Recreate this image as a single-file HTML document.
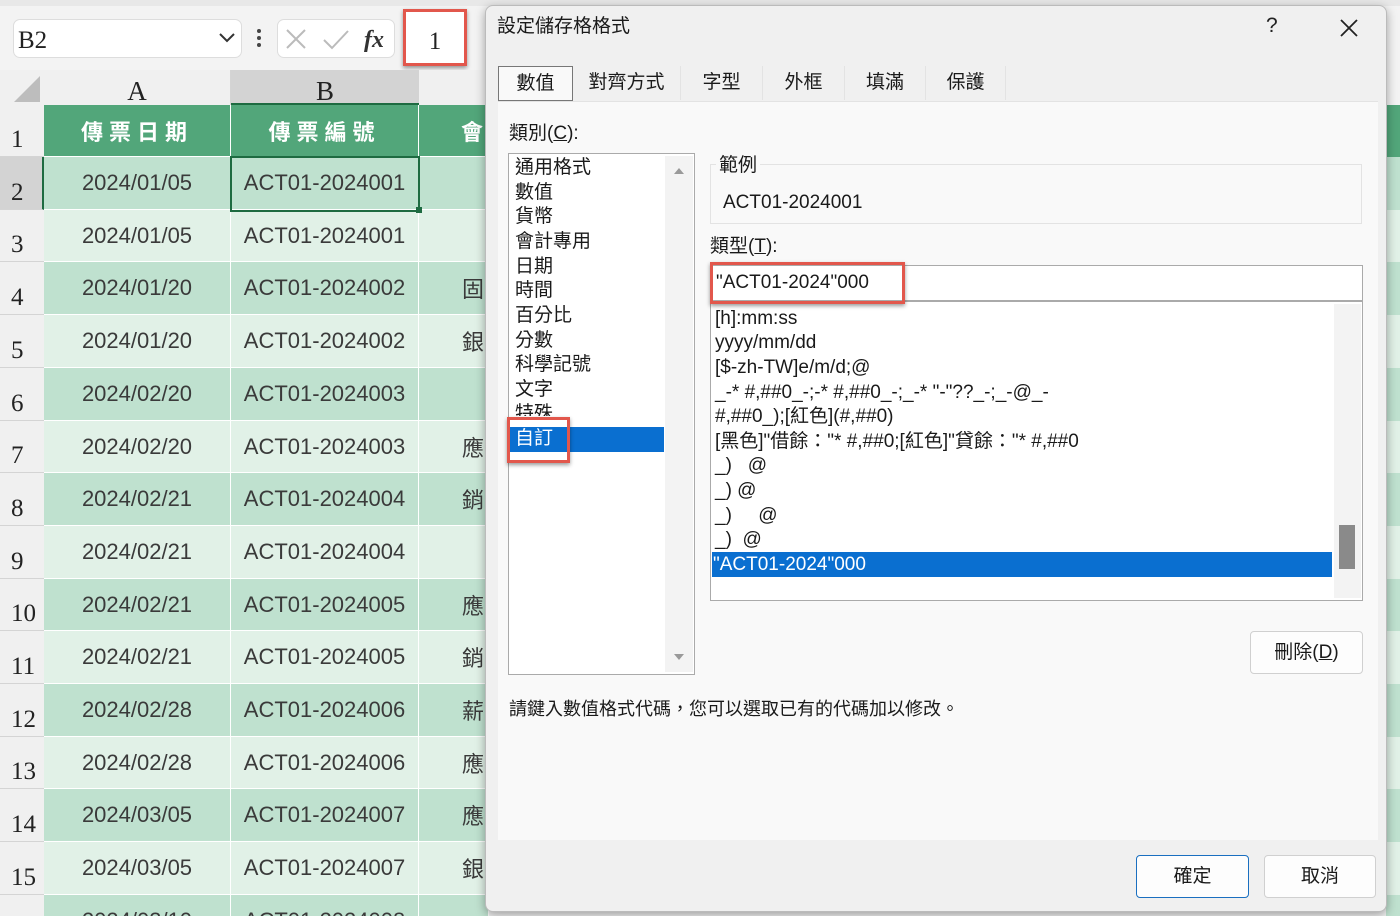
<!DOCTYPE html>
<html style="width:1400px;height:916px;overflow:hidden"><head><meta charset="utf-8"><style>
*{margin:0;padding:0;box-sizing:border-box}
body{width:1400px;height:916px;overflow:hidden;background:#f3f3f3;font-family:"Liberation Sans","Noto Sans CJK TC",sans-serif;position:relative;color:#222}
.a{position:absolute}
.cell{position:absolute;display:flex;align-items:center;justify-content:center;font-size:22px;color:#3a3a3a;border-right:1px solid #fff;border-bottom:1px solid #fff}
.rh{position:absolute;left:0;width:44px;background:#f0f0f0;border-bottom:1px solid #d4d4d4;font-family:"Liberation Serif",serif;font-size:25px;color:#222;display:flex;align-items:flex-end;padding:0 0 2px 11px}
.d{font-family:"Liberation Sans","Noto Sans CJK TC",sans-serif;font-size:19px;color:#1a1a1a;line-height:24px}
.li{position:absolute;left:515px;font-size:19px}
.fl{position:absolute;left:715px;font-size:19px;white-space:pre;height:24px;overflow:visible}
.tab{position:absolute;top:66px;height:34px;font-size:19px;display:flex;align-items:center;justify-content:center;background:#f0f0f0;border-right:1px solid #e3e3e3}
</style></head><body>
<div class="a" style="left:0;top:0;width:1400px;height:6px;background:#e8e8e8"></div>
<div class="a" style="left:13px;top:19px;width:229px;height:39px;background:#fff;border:1px solid #ddd;border-radius:7px;font-family:'Liberation Serif',serif;font-size:25px;padding:7px 0 0 4px">B2</div>
<svg class="a" style="left:218px;top:32px" width="18" height="12"><path d="M2 2 L9 9 L16 2" stroke="#333" stroke-width="2" fill="none"/></svg>
<div class="a" style="left:257px;top:29px;width:4px;height:4px;background:#444;border-radius:2px;box-shadow:0 7px 0 #444,0 14px 0 #444"></div>
<div class="a" style="left:277px;top:19px;width:118px;height:39px;background:#fff;border:1px solid #ddd;border-radius:7px"></div>
<svg class="a" style="left:284px;top:27px" width="110" height="26"><path d="M3 3 L21 21 M21 3 L3 21" stroke="#bbb" stroke-width="2"/><path d="M40 13 L48 21 L64 4" stroke="#bbb" stroke-width="2" fill="none"/><text x="80" y="20" font-family="Liberation Serif" font-style="italic" font-weight="bold" font-size="24" fill="#333">fx</text></svg>
<div class="a" style="left:403px;top:9px;width:64px;height:57px;border:3px solid #e2574c;box-shadow:0 2px 4px rgba(0,0,0,.4);background:#fff;font-family:'Liberation Serif',serif;font-size:25px;text-align:center;padding-top:16px">1</div>
<div class="a" style="left:0;top:70px;width:44px;height:35px;background:#f0f0f0"></div>
<svg class="a" style="left:12px;top:74px" width="30" height="30"><path d="M28 2 L28 28 L2 28 Z" fill="#bdbdbd"/></svg>
<div class="a" style="left:44px;top:70px;width:187px;height:35px;background:#f0f0f0;border-right:1px solid #d4d4d4;font-family:'Liberation Serif',serif;font-size:27px;text-align:center;padding-top:6px">A</div>
<div class="a" style="left:231px;top:70px;width:188px;height:35px;background:#d3d3d3;border-bottom:2px solid #1e6b41;font-family:'Liberation Serif',serif;font-size:27px;text-align:center;padding-top:6px">B</div>
<div class="a" style="left:419px;top:70px;width:70px;height:35px;background:#f0f0f0"></div>
<div class="a" style="left:1386px;top:105px;width:14px;height:52px;background:#52a67a"></div>
<div id="grid"></div>
<script>
var g='';
var rows=[["2024/01/05","ACT01-2024001",""],["2024/01/05","ACT01-2024001",""],["2024/01/20","ACT01-2024002","固"],["2024/01/20","ACT01-2024002","銀"],["2024/02/20","ACT01-2024003",""],["2024/02/20","ACT01-2024003","應"],["2024/02/21","ACT01-2024004","銷"],["2024/02/21","ACT01-2024004",""],["2024/02/21","ACT01-2024005","應"],["2024/02/21","ACT01-2024005","銷"],["2024/02/28","ACT01-2024006","薪"],["2024/02/28","ACT01-2024006","應"],["2024/03/05","ACT01-2024007","應"],["2024/03/05","ACT01-2024007","銀"],["2024/03/10","ACT01-2024008",""]];
var h=52.7;
g+='<div class="rh" style="top:105px;height:52px">1</div>';
g+='<div class="cell" style="left:44px;top:105px;width:187px;height:52px;background:#52a67a;color:#fff;font-family:\'Noto Sans CJK TC\';letter-spacing:6px;font-weight:bold">傳票日期</div>';
g+='<div class="cell" style="left:231px;top:105px;width:188px;height:52px;background:#52a67a;color:#fff;font-family:\'Noto Sans CJK TC\';letter-spacing:6px;font-weight:bold">傳票編號</div>';
g+='<div class="cell" style="left:419px;top:105px;width:70px;height:52px;background:#52a67a;color:#fff;justify-content:flex-start;padding-left:42px;font-family:\'Noto Sans CJK TC\';font-weight:bold">會</div>';
for(var i=0;i<15;i++){var t=Math.round(157+i*h),hh=Math.round(157+(i+1)*h)-t;var bg=i%2==0?'#bfe1cf':'#e1f1e7';
g+='<div class="rh" style="top:'+t+'px;height:'+hh+'px;'+(i==0?'background:#d3d3d3;border-right:2px solid #1e6b41':'')+'">'+(i+2)+'</div>';
g+='<div class="cell" style="left:44px;top:'+t+'px;width:187px;height:'+hh+'px;background:'+bg+'">'+rows[i][0]+'</div>';
g+='<div class="cell" style="left:231px;top:'+t+'px;width:188px;height:'+hh+'px;background:'+bg+'">'+rows[i][1]+'</div>';
g+='<div class="cell" style="left:419px;top:'+t+'px;width:70px;height:'+hh+'px;background:'+bg+';justify-content:flex-start;padding-left:43px;font-family:\'Noto Sans CJK TC\'">'+rows[i][2]+'</div>';
g+='<div class="a" style="left:1386px;top:'+t+'px;width:14px;height:'+hh+'px;background:'+bg+'"></div>';}
g+='<div class="a" style="left:230px;top:156px;width:190px;height:56px;border:2px solid #1e6b41"></div><div class="a" style="left:416px;top:207px;width:6px;height:6px;background:#1e6b41"></div>';
document.getElementById('grid').innerHTML=g;
</script>
<div class="a d" style="left:485px;top:5px;width:902px;height:907px;background:#f0f0f0;border:1px solid #bbb;border-radius:8px;box-shadow:0 3px 10px rgba(0,0,0,.35)"></div>
<div class="a d" style="left:497px;top:15px;font-size:19px">設定儲存格格式</div>
<div class="a" style="left:1266px;top:14px;font-size:21px">?</div>
<svg class="a" style="left:1339px;top:18px" width="20" height="20"><path d="M2 2 L18 18 M18 2 L2 18" stroke="#222" stroke-width="1.8"/></svg>
<div class="a" style="left:498px;top:101px;width:880px;height:739px;background:#f9f9f9;border-top:1px solid #e3e3e3"></div>
<div class="tab d" style="left:498px;width:75px;background:#f9f9f9;border:1px solid #777;height:35px">數值</div>
<div class="tab d" style="left:573px;width:108px">對齊方式</div>
<div class="tab d" style="left:681px;width:82px">字型</div>
<div class="tab d" style="left:763px;width:82px">外框</div>
<div class="tab d" style="left:845px;width:81px">填滿</div>
<div class="tab d" style="left:926px;width:80px">保護</div>
<div class="a d" style="left:509px;top:122px">類別(<u>C</u>):</div>
<div class="a" style="left:508px;top:153px;width:187px;height:522px;background:#fff;border:1px solid #aaa"></div>
<div class="a" style="left:665px;top:156px;width:28px;height:516px;background:#f3f3f3"></div>
<svg class="a" style="left:673px;top:166px" width="12" height="10"><path d="M1 8 L6 2 L11 8Z" fill="#999"/></svg>
<svg class="a" style="left:673px;top:652px" width="12" height="10"><path d="M1 2 L6 8 L11 2Z" fill="#999"/></svg>
<div class="a" style="left:510px;top:427px;width:154px;height:25px;background:#0a6fd0"></div>
<div class="li d" style="top:156px">通用格式</div>
<div class="li d" style="top:181px">數值</div>
<div class="li d" style="top:205px">貨幣</div>
<div class="li d" style="top:230px">會計專用</div>
<div class="li d" style="top:255px">日期</div>
<div class="li d" style="top:279px">時間</div>
<div class="li d" style="top:304px">百分比</div>
<div class="li d" style="top:329px">分數</div>
<div class="li d" style="top:353px">科學記號</div>
<div class="li d" style="top:378px">文字</div>
<div class="li d" style="top:402px;height:14px;overflow:hidden">特殊</div>
<div class="li d" style="top:427px;color:#fff">自訂</div>
<div class="a" style="left:507px;top:417px;width:63px;height:46px;border:3px solid #e2574c;box-shadow:0 2px 4px rgba(0,0,0,.4)"></div>
<div class="a" style="left:710px;top:164px;width:652px;height:60px;border:1px solid #e3e3e3"></div>
<div class="a d" style="left:716px;top:154px;background:#f9f9f9;padding:0 3px">範例</div>
<div class="a d" style="left:723px;top:191px">ACT01-2024001</div>
<div class="a d" style="left:710px;top:235px">類型(<u>T</u>):</div>
<div class="a" style="left:710px;top:265px;width:653px;height:36px;background:#fff;border:1px solid #aaa"></div>
<div class="a d" style="left:716px;top:271px">"ACT01-2024"000</div>
<div class="a" style="left:710px;top:301px;width:653px;height:300px;background:#fff;border:1px solid #aaa"></div>
<div class="a" style="left:1334px;top:304px;width:27px;height:294px;background:#f3f3f3"></div>
<div class="a" style="left:1339px;top:525px;width:16px;height:44px;background:#8a8a8a"></div>
<div class="a" style="left:712px;top:552px;width:620px;height:25px;background:#0a6fd0"></div>
<div class="fl d" style="top:307px">[h]:mm:ss</div>
<div class="fl d" style="top:331px">yyyy/mm/dd</div>
<div class="fl d" style="top:356px">[$-zh-TW]e/m/d;@</div>
<div class="fl d" style="top:381px">_-* #,##0_-;-* #,##0_-;_-* "-"??_-;_-@_-</div>
<div class="fl d" style="top:405px">#,##0_);[紅色](#,##0)</div>
<div class="fl d" style="top:430px">[黑色]"借餘："* #,##0;[紅色]"貸餘："* #,##0</div>
<div class="fl d" style="top:454px">_)   @</div>
<div class="fl d" style="top:479px">_) @</div>
<div class="fl d" style="top:504px">_)     @</div>
<div class="fl d" style="top:528px">_)  @</div>
<div class="fl d" style="top:553px;color:#fff;left:713px">"ACT01-2024"000</div>
<div class="a" style="left:710px;top:262px;width:195px;height:42px;border:3px solid #e2574c;box-shadow:0 2px 4px rgba(0,0,0,.4)"></div>
<div class="a d" style="left:1250px;top:631px;width:113px;height:43px;background:#fdfdfd;border:1px solid #d0d0d0;border-radius:4px;text-align:center;padding-top:9px">刪除(<u>D</u>)</div>
<div class="a d" style="left:509px;top:697px;font-size:18px">請鍵入數值格式代碼，您可以選取已有的代碼加以修改。</div>
<div class="a d" style="left:1136px;top:855px;width:113px;height:43px;background:#fdfdfd;border:1px solid #1a6fc0;border-radius:4px;text-align:center;padding-top:9px">確定</div>
<div class="a d" style="left:1264px;top:855px;width:112px;height:43px;background:#fdfdfd;border:1px solid #d0d0d0;border-radius:4px;text-align:center;padding-top:9px">取消</div>
</body></html>
